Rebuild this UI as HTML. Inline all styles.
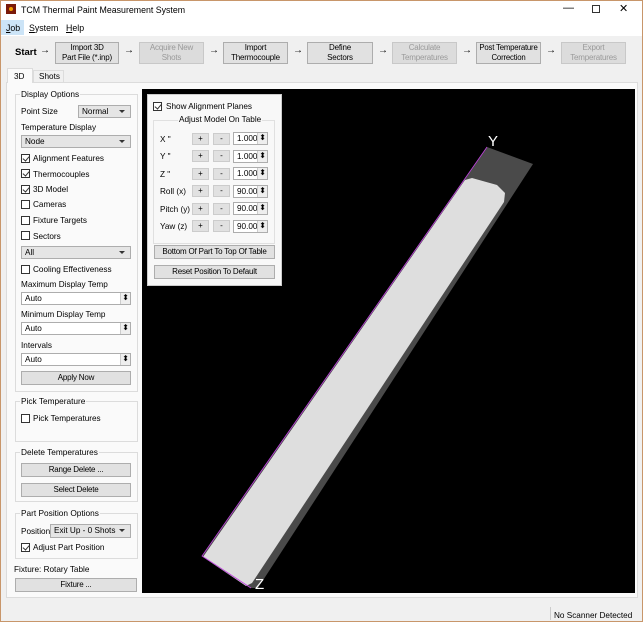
<!DOCTYPE html>
<html><head><meta charset="utf-8"><style>
*{box-sizing:border-box;margin:0;padding:0}
body{width:643px;height:622px;position:relative;overflow:hidden;background:#f0f0f0;font-family:"Liberation Sans",sans-serif;font-size:8.5px;color:#000}
.a{position:absolute}
.btn{position:absolute;background:#e1e1e1;border:1px solid #adadad;text-align:center;font-size:8px;line-height:10px;display:flex;align-items:center;justify-content:center;white-space:nowrap;letter-spacing:-0.2px}
.dis{color:#9a9a9a;border-color:#c8c8c8;background:#dcdcdc}
.arr{position:absolute;font-size:10px;top:45px}
.grp{position:absolute;border:1px solid #dcdcdc;left:15px;width:123px}
.gt{position:absolute;top:-6px;left:4px;background:#fafafa;padding:0 1px;font-size:8.3px}
.cb{position:absolute;width:9px;height:9px;border:1px solid #333;background:#fff}
.ck::after{content:"";position:absolute;left:2px;top:0px;width:3px;height:5px;border:solid #333;border-width:0 1px 1px 0;transform:rotate(40deg)}
.lb{position:absolute;font-size:8.2px;white-space:nowrap}
.combo{position:absolute;background:#e5e5e5;border:1px solid #adadad;font-size:8.2px;padding-left:3px;line-height:11px}
.combo::after{content:"";position:absolute;right:5px;top:4px;border:3px solid transparent;border-top:3px solid #333}
.spin{position:absolute;background:#fff;border:1px solid #adadad;font-size:8.2px;padding-left:3px;line-height:11px;overflow:hidden}
.spin::after{content:"";position:absolute;right:0;top:0;width:9px;height:100%;border-left:1px solid #ccc;background:#eee}
.spin::before{content:"⬍";position:absolute;right:1px;top:-1px;font-size:8px;z-index:1}
.pb{position:absolute;width:17px;height:12px;background:#e1e1e1;border:1px solid #ccc;text-align:center;font-size:8px;line-height:10px}
</style></head><body>
<div class="a" style="left:0;top:0;width:643px;height:622px;border:1px solid #c8966a;z-index:10;pointer-events:none"></div>
<div class="a" style="left:0;top:0;width:643px;height:20px;background:#fff"></div>
<div class="a" style="left:6px;top:4px;width:10px;height:10px;background:#7a1a0a"><div class="a" style="left:3px;top:3px;width:4px;height:4px;background:#f0a000;border-radius:2px"></div></div>
<div class="lb" style="left:21px;top:5px;font-size:8.8px">TCM Thermal Paint Measurement System</div>
<div class="lb" style="left:563px;top:2px;font-size:11px">—</div>
<div class="a" style="left:592px;top:5px;width:8px;height:8px;border:1px solid #333"></div>
<div class="lb" style="left:619px;top:2px;font-size:11px">✕</div>
<div class="a" style="left:0;top:20px;width:643px;height:16px;background:#fff"></div>
<div class="a" style="left:1px;top:20px;width:23px;height:15px;background:#cce4f7"></div>
<div class="lb" style="left:6px;top:23px;font-size:8.8px"><u>J</u>ob</div>
<div class="lb" style="left:29px;top:23px;font-size:8.8px"><u>S</u>ystem</div>
<div class="lb" style="left:66px;top:23px;font-size:8.8px"><u>H</u>elp</div>
<div class="lb" style="left:15px;top:47px;font-size:9.5px;font-weight:bold">Start</div>
<div class="arr" style="left:40px">→</div>
<div class="btn" style="left:55px;top:42px;width:64px;height:22px">Import 3D<br>Part File (*.inp)</div>
<div class="arr" style="left:124px">→</div>
<div class="btn dis" style="left:139px;top:42px;width:65px;height:22px">Acquire New<br>Shots</div>
<div class="arr" style="left:209px">→</div>
<div class="btn" style="left:223px;top:42px;width:65px;height:22px">Import<br>Thermocouple</div>
<div class="arr" style="left:293px">→</div>
<div class="btn" style="left:307px;top:42px;width:66px;height:22px">Define<br>Sectors</div>
<div class="arr" style="left:378px">→</div>
<div class="btn dis" style="left:392px;top:42px;width:65px;height:22px">Calculate<br>Temperatures</div>
<div class="arr" style="left:462px">→</div>
<div class="btn" style="left:476px;top:42px;width:65px;height:22px;font-size:7.8px">Post Temperature<br>Correction</div>
<div class="arr" style="left:546px">→</div>
<div class="btn dis" style="left:561px;top:42px;width:65px;height:22px">Export<br>Temperatures</div>

<div class="a" style="left:6px;top:82px;width:632px;height:516px;background:#fafafa;border:1px solid #dcdcdc"></div>
<div class="a" style="left:7px;top:68px;width:26px;height:15px;background:#fafafa;border:1px solid #dcdcdc;border-bottom:none"></div>
<div class="lb" style="left:14px;top:72px">3D</div>
<div class="a" style="left:33px;top:70px;width:31px;height:12px;background:#f0f0f0;border:1px solid #dcdcdc;border-bottom:none"></div>
<div class="lb" style="left:39px;top:72px">Shots</div>

<div class="grp" style="top:94px;height:298px"><span class="gt">Display Options</span></div>
<div class="lb" style="left:21px;top:107px">Point Size</div>
<div class="combo" style="left:78px;top:105px;width:53px;height:13px">Normal</div>
<div class="lb" style="left:21px;top:123px">Temperature Display</div>
<div class="combo" style="left:21px;top:135px;width:110px;height:13px">Node</div>
<div class="cb ck" style="left:21px;top:154px"></div><div class="lb" style="left:33px;top:154px">Alignment Features</div>
<div class="cb ck" style="left:21px;top:169px"></div><div class="lb" style="left:33px;top:170px">Thermocouples</div>
<div class="cb ck" style="left:21px;top:185px"></div><div class="lb" style="left:33px;top:185px">3D Model</div>
<div class="cb" style="left:21px;top:200px"></div><div class="lb" style="left:33px;top:200px">Cameras</div>
<div class="cb" style="left:21px;top:216px"></div><div class="lb" style="left:33px;top:216px">Fixture Targets</div>
<div class="cb" style="left:21px;top:231px"></div><div class="lb" style="left:33px;top:232px">Sectors</div>
<div class="combo" style="left:21px;top:246px;width:110px;height:13px">All</div>
<div class="cb" style="left:21px;top:265px"></div><div class="lb" style="left:33px;top:265px">Cooling Effectiveness</div>
<div class="lb" style="left:21px;top:280px">Maximum Display Temp</div>
<div class="spin" style="left:21px;top:292px;width:110px;height:13px">Auto</div>
<div class="lb" style="left:21px;top:310px">Minimum Display Temp</div>
<div class="spin" style="left:21px;top:322px;width:110px;height:13px">Auto</div>
<div class="lb" style="left:21px;top:341px">Intervals</div>
<div class="spin" style="left:21px;top:353px;width:110px;height:13px">Auto</div>
<div class="btn" style="left:21px;top:371px;width:110px;height:14px">Apply Now</div>

<div class="grp" style="top:401px;height:41px"><span class="gt">Pick Temperature</span></div>
<div class="cb" style="left:21px;top:414px"></div><div class="lb" style="left:33px;top:414px">Pick Temperatures</div>

<div class="grp" style="top:452px;height:50px"><span class="gt">Delete Temperatures</span></div>
<div class="btn" style="left:21px;top:463px;width:110px;height:14px">Range Delete ...</div>
<div class="btn" style="left:21px;top:483px;width:110px;height:14px">Select Delete</div>

<div class="grp" style="top:513px;height:46px"><span class="gt">Part Position Options</span></div>
<div class="lb" style="left:21px;top:527px">Position</div>
<div class="combo" style="left:50px;top:524px;width:81px;height:14px">Exit Up - 0 Shots</div>
<div class="cb ck" style="left:21px;top:543px"></div><div class="lb" style="left:33px;top:543px">Adjust Part Position</div>
<div class="lb" style="left:14px;top:565px">Fixture: Rotary Table</div>
<div class="btn" style="left:15px;top:578px;width:122px;height:14px">Fixture ...</div>

<div class="a" style="left:142px;top:89px;width:493px;height:504px;background:#000"></div>
<svg class="a" style="left:0;top:0" width="643" height="622">
<polygon points="487,147 533,164 258,588 250,588 202,556" fill="#4a4a4a"/>
<polygon points="465,180 472,178 497,185 505,193 504,202 252,583 246,586 203,557" fill="#dedede"/>
<polyline points="487,147 202,556 251,588" fill="none" stroke="#c040e0" stroke-width="0.8"/>
<text x="488" y="146" fill="#fff" font-family="Liberation Sans" font-size="15">Y</text>
<text x="255" y="589" fill="#fff" font-family="Liberation Sans" font-size="15">Z</text>
</svg>

<div class="a" style="left:147px;top:94px;width:135px;height:192px;background:#f8f8f8;border:1px solid #ccc"></div>
<div class="cb ck" style="left:153px;top:102px"></div><div class="lb" style="left:166px;top:102px">Show Alignment Planes</div>
<div class="a" style="left:153px;top:120px;width:122px;height:124px;border:1px solid #e0e0e0"></div>
<div class="lb" style="left:178px;top:115px;background:#f8f8f8;padding:0 1px">Adjust Model On Table</div>
<div class="lb" style="left:160px;top:135px">X "</div><div class="pb" style="left:192px;top:133px">+</div><div class="pb" style="left:213px;top:133px">-</div><div class="spin" style="left:233px;top:132px;width:35px;height:13px">1.000</div>
<div class="lb" style="left:160px;top:152px">Y "</div><div class="pb" style="left:192px;top:150px">+</div><div class="pb" style="left:213px;top:150px">-</div><div class="spin" style="left:233px;top:150px;width:35px;height:13px">1.000</div>
<div class="lb" style="left:160px;top:170px">Z "</div><div class="pb" style="left:192px;top:168px">+</div><div class="pb" style="left:213px;top:168px">-</div><div class="spin" style="left:233px;top:167px;width:35px;height:13px">1.000</div>
<div class="lb" style="left:160px;top:187px">Roll (x)</div><div class="pb" style="left:192px;top:185px">+</div><div class="pb" style="left:213px;top:185px">-</div><div class="spin" style="left:233px;top:185px;width:35px;height:13px">90.000</div>
<div class="lb" style="left:160px;top:205px">Pitch (y)</div><div class="pb" style="left:192px;top:203px">+</div><div class="pb" style="left:213px;top:203px">-</div><div class="spin" style="left:233px;top:202px;width:35px;height:13px">90.000</div>
<div class="lb" style="left:160px;top:222px">Yaw (z)</div><div class="pb" style="left:192px;top:220px">+</div><div class="pb" style="left:213px;top:220px">-</div><div class="spin" style="left:233px;top:220px;width:35px;height:13px">90.000</div>
<div class="btn" style="left:154px;top:245px;width:121px;height:14px">Bottom Of Part To Top Of Table</div>
<div class="btn" style="left:154px;top:265px;width:121px;height:14px">Reset Position To Default</div>

<div class="a" style="left:550px;top:607px;width:1px;height:13px;background:#ccc"></div>
<div class="lb" style="left:554px;top:611px">No Scanner Detected</div>
</body></html>
